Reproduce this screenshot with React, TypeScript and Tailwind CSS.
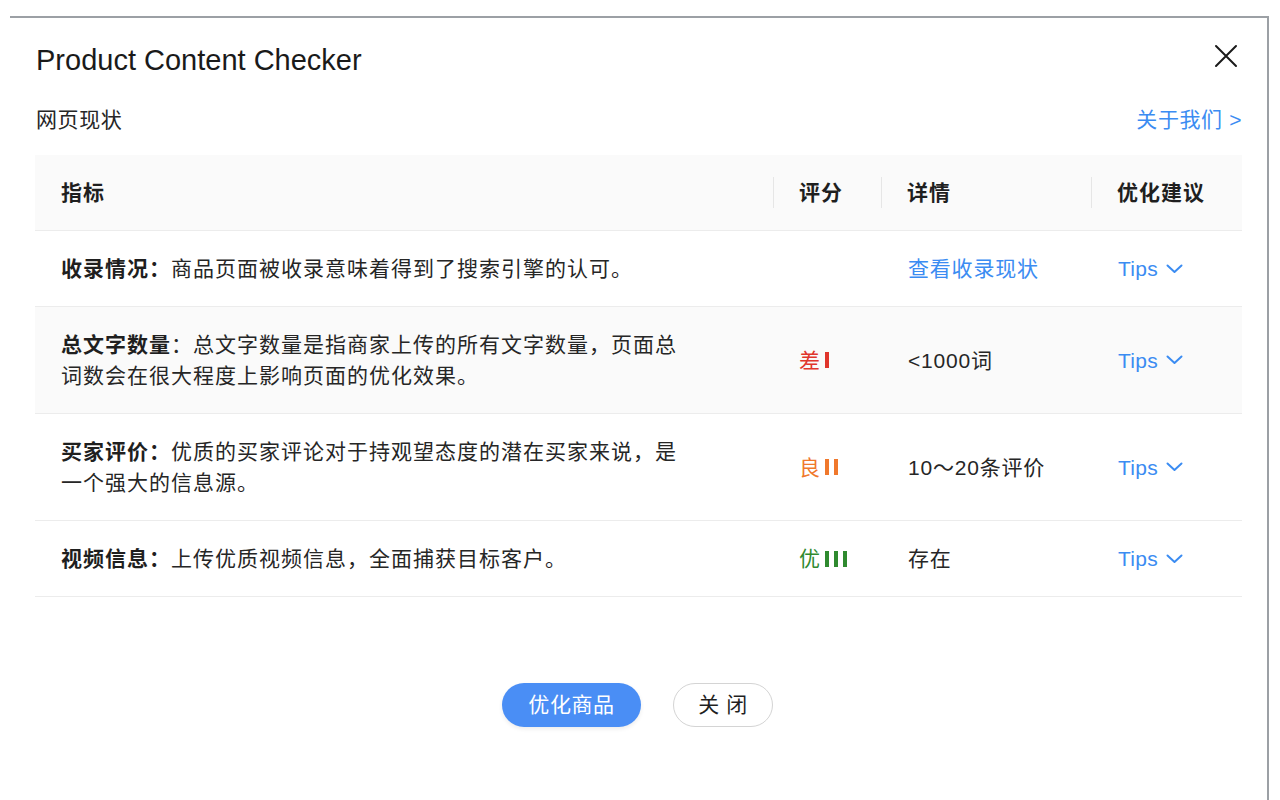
import React from "react";

const FONT = '"Liberation Sans", "Noto Sans CJK SC", sans-serif';

type Row = {
  label: string;
  desc: string;
  score?: { text: string; color: string; bars: number };
  detail: string;
  detailLink?: boolean;
  shaded?: boolean;
};

const rows: Row[] = [
  {
    label: "收录情况：",
    desc: "商品页面被收录意味着得到了搜索引擎的认可。",
    detail: "查看收录现状",
    detailLink: true,
  },
  {
    label: "总文字数量",
    desc: "：总文字数量是指商家上传的所有文字数量，页面总词数会在很大程度上影响页面的优化效果。",
    score: { text: "差", color: "text-[#e0362c]", bars: 1 },
    detail: "<1000词",
    shaded: true,
  },
  {
    label: "买家评价：",
    desc: "优质的买家评论对于持观望态度的潜在买家来说，是一个强大的信息源。",
    score: { text: "良", color: "text-[#f0782c]", bars: 2 },
    detail: "10～20条评价",
  },
  {
    label: "视频信息：",
    desc: "上传优质视频信息，全面捕获目标客户。",
    score: { text: "优", color: "text-[#2f8a2f]", bars: 3 },
    detail: "存在",
  },
];

const barColor: Record<string, string> = {
  "text-[#e0362c]": "bg-[#e0362c]",
  "text-[#f0782c]": "bg-[#f0782c]",
  "text-[#2f8a2f]": "bg-[#2f8a2f]",
};

function Chevron() {
  return (
    <svg width="17" height="10" viewBox="0 0 17 10" fill="none" className="ml-[8px]">
      <path d="M1.5 1.5 L8.5 8 L15.5 1.5" stroke="#3b8cf2" strokeWidth="2" strokeLinecap="round" strokeLinejoin="round" />
    </svg>
  );
}

function HeaderCell({ text, divider }: { text: string; divider?: boolean }) {
  return (
    <div className="flex items-center h-full">
      {divider ? <div className="w-px h-[31px] bg-[#e6e6e6]" /> : <div className="w-px h-[31px]" />}
      <span className="ml-[25px] font-bold text-[21px] tracking-[1px] text-[#1f1f1f]">{text}</span>
    </div>
  );
}

export default function App() {
  return (
    <div className="w-[1280px] h-[800px] bg-white overflow-hidden" style={{ fontFamily: FONT }}>
      <div className="ml-[10px] mt-[16px] w-[1259px] h-[784px] border-t-2 border-r-2 border-[#9ca0a5] px-[25px]">
        {/* Title row */}
        <div className="flex items-start justify-between pt-[24px]">
          <h1 className="text-[29px] leading-[36px] text-[#1a1a1a] pl-px">Product Content Checker</h1>
          <button className="mt-[2px] mr-[4px]">
            <svg width="24" height="24" viewBox="0 0 24 24" fill="none">
              <path d="M2 2 L22 22 M22 2 L2 22" stroke="#1a1a1a" strokeWidth="2" strokeLinecap="round" />
            </svg>
          </button>
        </div>

        {/* Sub header */}
        <div className="flex items-center justify-between mt-[26px] h-[32px]">
          <span className="text-[21px] tracking-[0.6px] text-[#262626] pl-px">网页现状</span>
          <span className="text-[21px] tracking-[0.6px] text-[#3b8cf2]">关于我们 &gt;</span>
        </div>

        {/* Table */}
        <div className="mt-[19px] w-[1207px]">
          <div className="grid grid-cols-[738px_108px_210px_151px] h-[76px] bg-[#fafafa] border-b border-[#ececec]">
            <HeaderCell text="指标" />
            <HeaderCell text="评分" divider />
            <HeaderCell text="详情" divider />
            <HeaderCell text="优化建议" divider />
          </div>
          {rows.map((r, i) => (
            <div
              key={i}
              className={`grid grid-cols-[738px_108px_210px_151px] items-center py-[22px] border-b border-[#ececec] ${r.shaded ? "bg-[#fafafa]" : "bg-white"}`}
            >
              <div className="pl-[26px] pr-[90px] text-[21px] leading-[31px] tracking-[1px] text-[#262626]">
                <span className="font-bold text-[#1f1f1f]">{r.label}</span>
                {r.desc}
              </div>
              <div className="pl-[26px] flex items-center">
                {r.score && (
                  <>
                    <span className={`text-[21px] leading-[31px] ${r.score.color}`}>{r.score.text}</span>
                    <span className="flex items-center gap-[5px] ml-[5px]">
                      {Array.from({ length: r.score.bars }).map((_, k) => (
                        <span key={k} className={`inline-block w-[4px] h-[16px] ${barColor[r.score!.color]}`} />
                      ))}
                    </span>
                  </>
                )}
              </div>
              <div
                className={`pl-[27px] text-[21px] leading-[31px] tracking-[0.8px] ${r.detailLink ? "text-[#3b8cf2]" : "text-[#262626]"}`}
              >
                {r.detail}
              </div>
              <div className="pl-[27px] flex items-center text-[21px] leading-[31px] tracking-[0.3px] text-[#3b8cf2]">
                Tips
                <Chevron />
              </div>
            </div>
          ))}
        </div>

        {/* Buttons */}
        <div className="flex justify-center gap-[32px] mt-[86px] pr-[2px]">
          <button className="w-[139px] h-[44px] rounded-full bg-[#4a8ef5] text-white text-[21px] tracking-[0.6px] shadow-[0_2px_4px_rgba(0,0,0,0.08)]">
            优化商品
          </button>
          <button className="w-[100px] h-[44px] rounded-full bg-white border border-[#d4d4d4] text-[#1f1f1f] text-[21px] tracking-[0.6px]">
            关 闭
          </button>
        </div>
      </div>
    </div>
  );
}
